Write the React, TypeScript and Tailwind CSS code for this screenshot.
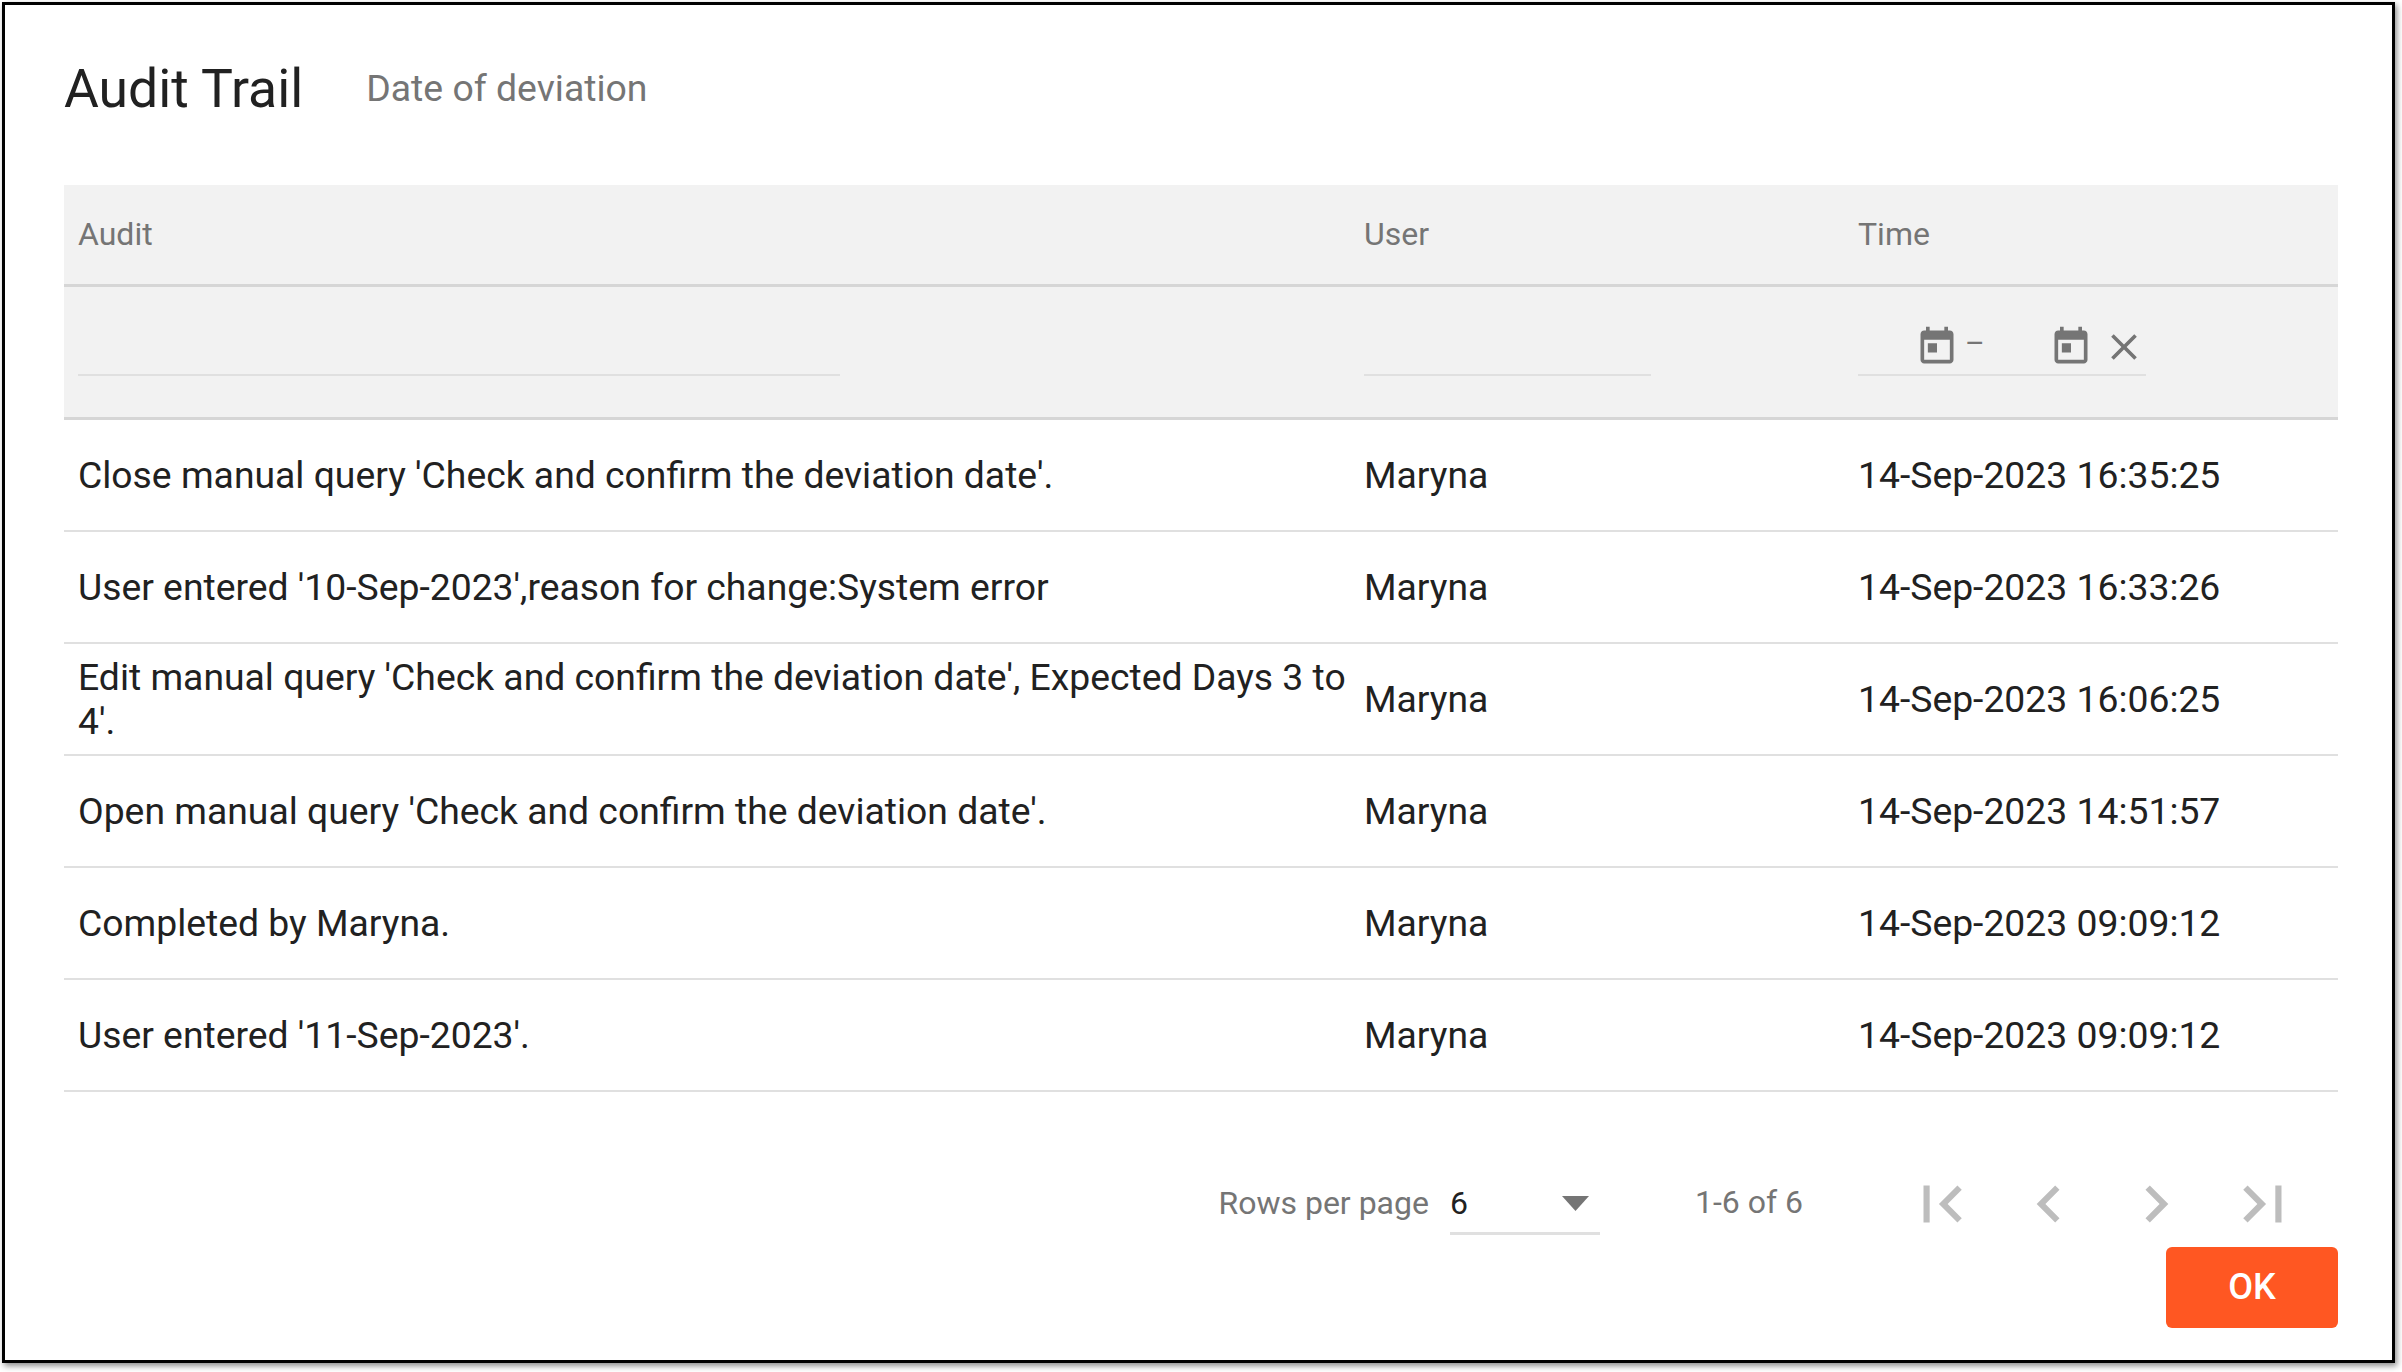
const FONT = "font-['Roboto',sans-serif]";

const rows = [
  { audit: "Close manual query 'Check and confirm the deviation date'.", time: "14-Sep-2023 16:35:25" },
  { audit: "User entered '10-Sep-2023',reason for change:System error", time: "14-Sep-2023 16:33:26" },
  { audit: "Edit manual query 'Check and confirm the deviation date', Expected Days 3 to 4'.", time: "14-Sep-2023 16:06:25" },
  { audit: "Open manual query 'Check and confirm the deviation date'.", time: "14-Sep-2023 14:51:57" },
  { audit: "Completed by Maryna.", time: "14-Sep-2023 09:09:12" },
  { audit: "User entered '11-Sep-2023'.", time: "14-Sep-2023 09:09:12" },
];

const gridCols = "grid grid-cols-[1286px_494px_494px]";

const MaterialIcon = ({ d, className }: { d: string; className: string }) => (
  <svg viewBox="0 0 24 24" fill="currentColor" className={className}>
    <path d={d} />
  </svg>
);

const TODAY = "M19 3h-1V1h-2v2H8V1H6v2H5c-1.11 0-1.99.9-1.99 2L3 19c0 1.1.89 2 2 2h14c1.1 0 2-.9 2-2V5c0-1.1-.9-2-2-2zm0 16H5V8h14v11zM7 10h5v5H7z";
const CLEAR = "M19 6.41L17.59 5 12 10.59 6.41 5 5 6.41 10.59 12 5 17.59 6.41 19 12 13.41 17.59 19 19 17.59 13.41 12z";
const FIRST = "M18.41 16.59L13.82 12l4.59-4.59L17 6l-6 6 6 6zM6 6h2v12H6z";
const PREV = "M15.41 7.41L14 6l-6 6 6 6 1.41-1.41L10.83 12z";
const NEXT = "M10 6L8.59 7.41 13.17 12l-4.58 4.59L10 18l6-6z";
const LAST = "M5.59 7.41L10.18 12l-4.59 4.59L7 18l6-6-6-6zM16 6h2v12h-2z";

export default function App() {
  return (
    <div className={`w-[2402px] h-[1372px] bg-white p-[2px] ${FONT}`}>
      <div className="w-[2393px] h-[1361px] border-[3px] border-black bg-white pl-[59px] pr-[54px] shadow-[2px_3px_6px_rgba(0,0,0,0.45)]">
        {/* Title */}
        <div className="h-[180px] pb-[12px] flex items-center">
          <h2 className="text-[53.5px] leading-none text-[#212121]">Audit Trail</h2>
          <span className="ml-[63px] text-[37.4px] leading-none text-[#757575]">Date of deviation</span>
        </div>

        {/* Table head */}
        <div className="bg-[#f2f2f2] text-[32px] text-[#757575]">
          <div className={`${gridCols} h-[102px] pb-[2px] items-center border-b-[3px] border-[#d6d6d6]`}>
            <div className="pl-[14px]">Audit</div>
            <div className="pl-[14px]">User</div>
            <div className="pl-[14px]">Time</div>
          </div>
          <div className={`${gridCols} h-[133px] border-b-[3px] border-[#d6d6d6]`}>
            <div className="pl-[14px] pt-[42px]">
              <div className="w-[762px] h-[47px] border-b-2 border-[#e0e0e0]" />
            </div>
            <div className="pl-[14px] pt-[42px]">
              <div className="w-[287px] h-[47px] border-b-2 border-[#e0e0e0]" />
            </div>
            <div className="pl-[14px] pt-[17px]">
              <div className="w-[288px] h-[72px] border-b-2 border-[#e0e0e0] flex items-start text-[#757575] pt-[21px] pl-[57px]">
                <MaterialIcon d={TODAY} className="w-[44px] h-[44px] shrink-0" />
                <span className="ml-[6px] text-[30px] leading-[36px]">–</span>
                <MaterialIcon d={TODAY} className="ml-[64px] w-[44px] h-[44px] shrink-0" />
                <MaterialIcon d={CLEAR} className="ml-[9px] w-[44px] h-[44px] shrink-0" />
              </div>
            </div>
          </div>
        </div>

        {/* Rows */}
        {rows.map((row) => (
          <div
            key={row.time + row.audit}
            className={`${gridCols} h-[112px] items-center border-b-2 border-[#e0e0e0] text-[37.3px] leading-[44px] text-[#212121]`}
          >
            <div className="pl-[14px]">{row.audit}</div>
            <div className="pl-[14px]">Maryna</div>
            <div className="pl-[14px]">{row.time}</div>
          </div>
        ))}

        {/* Pagination */}
        <div className="mt-[75px] h-[74px] flex items-center justify-end text-[#757575]">
          <span className="text-[32px] mb-[2px]">Rows per page</span>
          <div className="ml-[21px] w-[150px] h-[60px] mt-[2px] border-b-[3px] border-[#e0e0e0] flex items-start justify-between">
            <span className="text-[32px] leading-[30px] text-[#212121] mt-[13px]">6</span>
            <svg viewBox="0 0 27 15" fill="currentColor" className="w-[27px] h-[15px] mr-[11px] mt-[21px]">
              <path d="M0 0h27L13.5 15z" />
            </svg>
          </div>
          <span className="ml-[95px] text-[32px] mb-[4px]">1-6 of 6</span>
          <div className="ml-[102px] mr-[38px] flex gap-[33px] text-[#bdbdbd]">
            <MaterialIcon d={FIRST} className="w-[74px] h-[74px]" />
            <MaterialIcon d={PREV} className="w-[74px] h-[74px]" />
            <MaterialIcon d={NEXT} className="w-[74px] h-[74px]" />
            <MaterialIcon d={LAST} className="w-[74px] h-[74px]" />
          </div>
        </div>

        {/* Actions */}
        <div className="mt-[6px] flex justify-end">
          <button className="w-[172px] h-[81px] pb-[2px] rounded-[6px] bg-[#ff5722] text-white text-[36px] font-medium">OK</button>
        </div>
      </div>
    </div>
  );
}
